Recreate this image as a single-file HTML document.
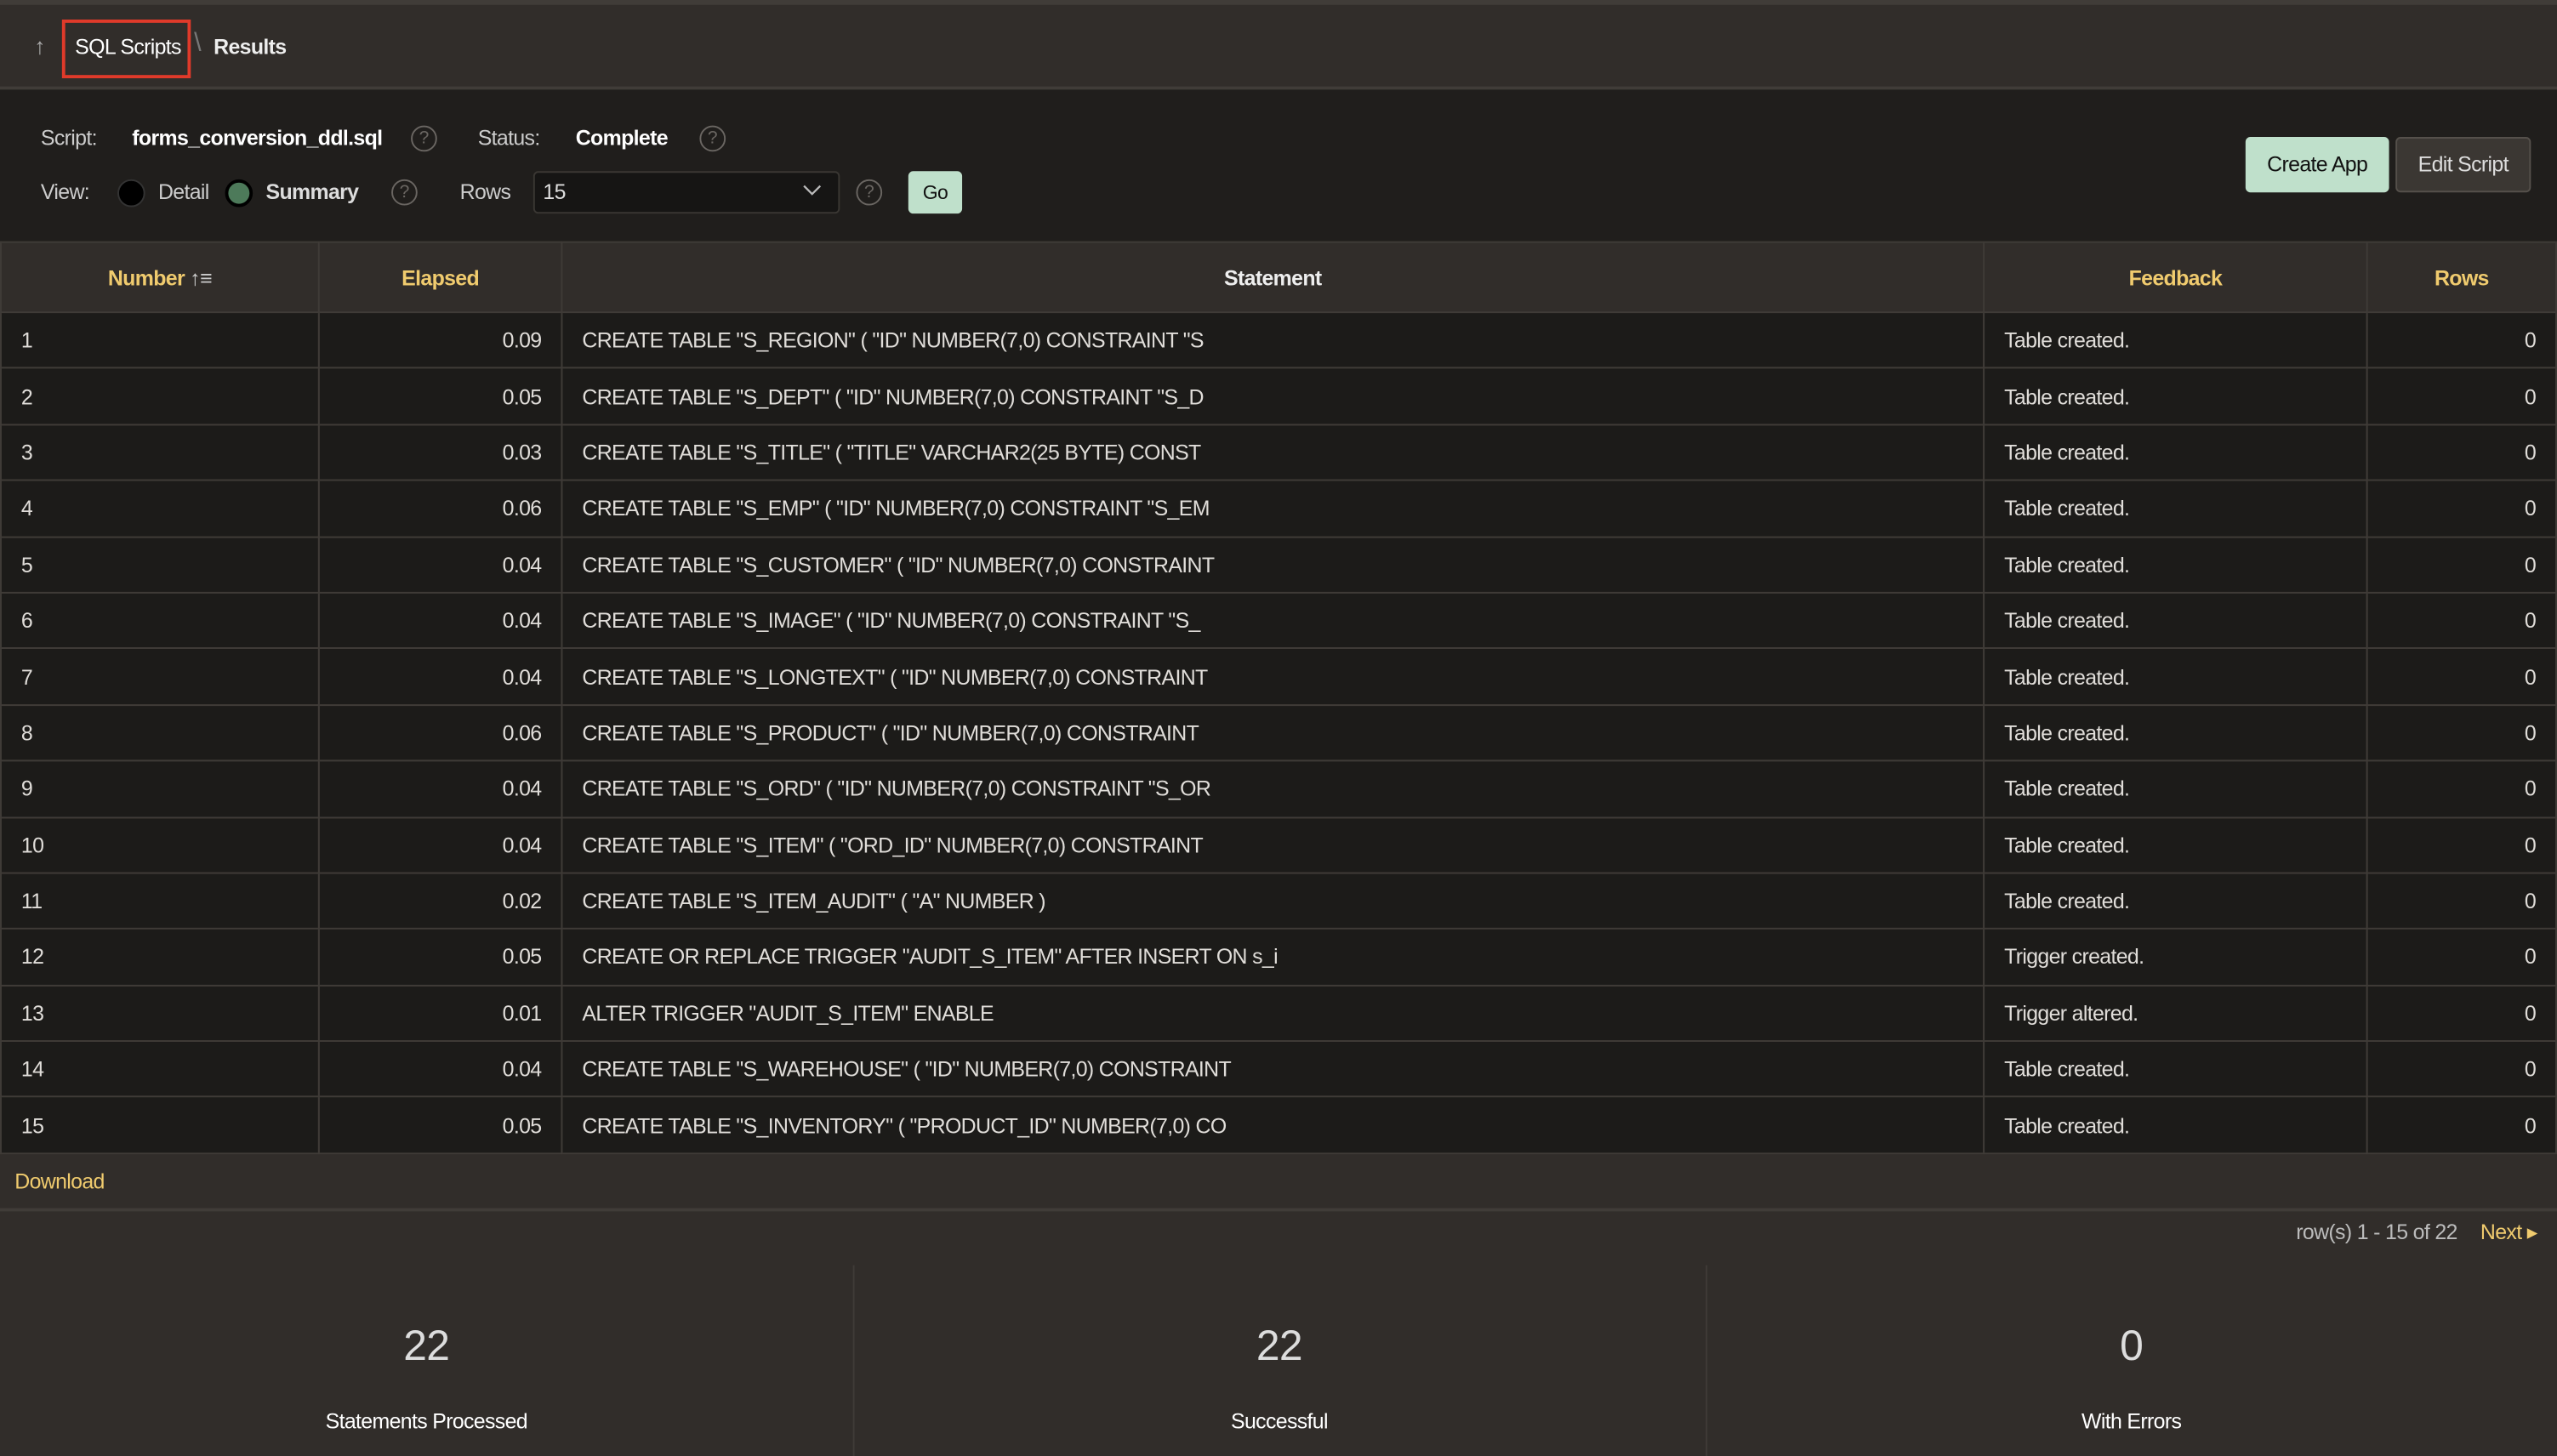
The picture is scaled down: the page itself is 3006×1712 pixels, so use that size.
<!DOCTYPE html>
<html><head><meta charset="utf-8"><style>
html,body{margin:0;padding:0;background:#312d2a;width:3006px;height:1712px;overflow:hidden}
#w{position:absolute;left:0;top:0;width:1568px;height:893px;transform:scale(1.917092);transform-origin:0 0;font-family:"Liberation Sans",sans-serif;color:#e8e6e3;font-size:13px;background:#312d2a;letter-spacing:-0.35px}
.a{position:absolute}
.hdr{left:0;top:0;width:1568px;height:55px;background:#312d2a;border-top:3px solid #403c38;box-sizing:border-box;border-bottom:2px solid #403c38}
.ctl{left:0;top:55px;width:1568px;height:93px;background:#201e1c}
.q{width:16px;height:16px;border:1px solid #6a6662;border-radius:50%;box-sizing:border-box;color:#6a6662;font-size:11px;text-align:center;line-height:14px;letter-spacing:0}
table{position:absolute;left:0;top:148px;border-collapse:collapse;width:1568px;table-layout:fixed}
td,th{border:1px solid #3f3b37;padding:0 12px;height:33.4px;font-size:13px;white-space:nowrap;overflow:hidden}
th{background:#312d2a;color:#f0cb6e;height:42px;font-weight:bold}
td{background:#1c1b19;color:#e0ddd9}
.r{text-align:right}
.sum{top:776px;height:117px;width:523px;text-align:center}
</style></head><body><div id="w">
<div class="a hdr"></div>
<div class="a" style="left:21px;top:20px;color:#aaa;font-size:14px">↑</div>
<div class="a" style="left:38px;top:12px;width:75px;height:32px;border:2px solid #e03a2a;box-sizing:border-box;width:79px;height:36px"></div>
<div class="a" style="left:46px;top:21px;color:#fff">SQL Scripts</div>
<div class="a" style="left:119px;top:18px;color:#777;font-size:16px">\</div>
<div class="a" style="left:131px;top:21px;color:#eee;font-weight:bold">Results</div>
<div class="a ctl"></div>
<div class="a" style="left:25px;top:77px;color:#ccc">Script:</div>
<div class="a" style="left:81px;top:77px;color:#fff;font-weight:bold">forms_conversion_ddl.sql</div>
<div class="a q" style="left:252px;top:77px">?</div>
<div class="a" style="left:293px;top:77px;color:#ccc">Status:</div>
<div class="a" style="left:353px;top:77px;color:#fff;font-weight:bold">Complete</div>
<div class="a q" style="left:429px;top:77px">?</div>
<div class="a" style="left:25px;top:110px;color:#ccc">View:</div>
<div class="a" style="left:72px;top:110px;width:15px;height:15px;border-radius:50%;background:#000;border:1px solid #333"></div>
<div class="a" style="left:97px;top:110px;color:#ccc">Detail</div>
<div class="a" style="left:138px;top:110px;width:13px;height:13px;border-radius:50%;background:#4d7a5a;border:2px solid #000"></div>
<div class="a" style="left:163px;top:110px;color:#ddd;font-weight:bold">Summary</div>
<div class="a q" style="left:240px;top:110px">?</div>
<div class="a" style="left:282px;top:110px;color:#ccc">Rows</div>
<div class="a" style="left:327px;top:105px;width:188px;height:26px;background:#161514;border:1px solid #3a3733;box-sizing:border-box;border-radius:3px"></div>
<div class="a" style="left:333px;top:110px;color:#ddd">15</div>
<svg class="a" style="left:492px;top:113px" width="12" height="8" viewBox="0 0 12 8"><path d="M1 1l5 5 5-5" stroke="#bbb" stroke-width="1.2" fill="none"/></svg>
<div class="a q" style="left:525px;top:110px">?</div>
<div class="a" style="left:557px;top:105px;width:33px;height:26px;background:#bfe0cb;border-radius:3px;color:#111;text-align:center;line-height:26px;font-size:12px">Go</div>
<div class="a" style="left:1377px;top:84px;width:88px;height:34px;background:#bfe0cb;border-radius:3px;color:#111;text-align:center;line-height:34px">Create App</div>
<div class="a" style="left:1469px;top:84px;width:83px;height:34px;background:#3b3733;border:1px solid #55504b;box-sizing:border-box;border-radius:3px;color:#ddd;text-align:center;line-height:32px">Edit Script</div>
<table>
<colgroup><col style="width:195px"><col style="width:149px"><col style="width:872px"><col style="width:235px"><col></colgroup>
<tr><th>Number <span style="color:#ccc;font-weight:normal">↑≡</span></th><th>Elapsed</th><th style="color:#eee">Statement</th><th>Feedback</th><th>Rows</th></tr>
<tr><td>1</td><td class="r">0.09</td><td>CREATE TABLE "S_REGION" ( "ID" NUMBER(7,0) CONSTRAINT "S</td><td>Table created.</td><td class="r">0</td></tr>
<tr><td>2</td><td class="r">0.05</td><td>CREATE TABLE "S_DEPT" ( "ID" NUMBER(7,0) CONSTRAINT "S_D</td><td>Table created.</td><td class="r">0</td></tr>
<tr><td>3</td><td class="r">0.03</td><td>CREATE TABLE "S_TITLE" ( "TITLE" VARCHAR2(25 BYTE) CONST</td><td>Table created.</td><td class="r">0</td></tr>
<tr><td>4</td><td class="r">0.06</td><td>CREATE TABLE "S_EMP" ( "ID" NUMBER(7,0) CONSTRAINT "S_EM</td><td>Table created.</td><td class="r">0</td></tr>
<tr><td>5</td><td class="r">0.04</td><td>CREATE TABLE "S_CUSTOMER" ( "ID" NUMBER(7,0) CONSTRAINT</td><td>Table created.</td><td class="r">0</td></tr>
<tr><td>6</td><td class="r">0.04</td><td>CREATE TABLE "S_IMAGE" ( "ID" NUMBER(7,0) CONSTRAINT "S_</td><td>Table created.</td><td class="r">0</td></tr>
<tr><td>7</td><td class="r">0.04</td><td>CREATE TABLE "S_LONGTEXT" ( "ID" NUMBER(7,0) CONSTRAINT</td><td>Table created.</td><td class="r">0</td></tr>
<tr><td>8</td><td class="r">0.06</td><td>CREATE TABLE "S_PRODUCT" ( "ID" NUMBER(7,0) CONSTRAINT</td><td>Table created.</td><td class="r">0</td></tr>
<tr><td>9</td><td class="r">0.04</td><td>CREATE TABLE "S_ORD" ( "ID" NUMBER(7,0) CONSTRAINT "S_OR</td><td>Table created.</td><td class="r">0</td></tr>
<tr><td>10</td><td class="r">0.04</td><td>CREATE TABLE "S_ITEM" ( "ORD_ID" NUMBER(7,0) CONSTRAINT</td><td>Table created.</td><td class="r">0</td></tr>
<tr><td>11</td><td class="r">0.02</td><td>CREATE TABLE "S_ITEM_AUDIT" ( "A" NUMBER )</td><td>Table created.</td><td class="r">0</td></tr>
<tr><td>12</td><td class="r">0.05</td><td>CREATE OR REPLACE TRIGGER "AUDIT_S_ITEM" AFTER INSERT ON s_i</td><td>Trigger created.</td><td class="r">0</td></tr>
<tr><td>13</td><td class="r">0.01</td><td>ALTER TRIGGER "AUDIT_S_ITEM" ENABLE</td><td>Trigger altered.</td><td class="r">0</td></tr>
<tr><td>14</td><td class="r">0.04</td><td>CREATE TABLE "S_WAREHOUSE" ( "ID" NUMBER(7,0) CONSTRAINT</td><td>Table created.</td><td class="r">0</td></tr>
<tr><td>15</td><td class="r">0.05</td><td>CREATE TABLE "S_INVENTORY" ( "PRODUCT_ID" NUMBER(7,0) CO</td><td>Table created.</td><td class="r">0</td></tr>
</table>
<div class="a" style="left:0;top:708px;width:1568px;height:33px;border-bottom:2px solid #403c38;background:#312d2a"></div>
<div class="a" style="left:9px;top:717px;color:#f0cb6e">Download</div>
<div class="a" style="left:1408px;top:748px;color:#bbb">row(s) 1 - 15 of 22</div>
<div class="a" style="left:1521px;top:748px;color:#f0cb6e">Next ▸</div>
<div class="a sum" style="left:0;border-right:1px solid #3f3b37"></div>
<div class="a sum" style="left:523px;border-right:1px solid #3f3b37"></div>
<div class="a" style="left:0;top:810px;width:523px;text-align:center;font-size:26px;color:#ddd">22</div>
<div class="a" style="left:0;top:864px;width:523px;text-align:center;color:#fff">Statements Processed</div>
<div class="a" style="left:523px;top:810px;width:523px;text-align:center;font-size:26px;color:#ddd">22</div>
<div class="a" style="left:523px;top:864px;width:523px;text-align:center;color:#fff">Successful</div>
<div class="a" style="left:1046px;top:810px;width:522px;text-align:center;font-size:26px;color:#ddd">0</div>
<div class="a" style="left:1046px;top:864px;width:522px;text-align:center;color:#fff">With Errors</div>
</div></body></html>
